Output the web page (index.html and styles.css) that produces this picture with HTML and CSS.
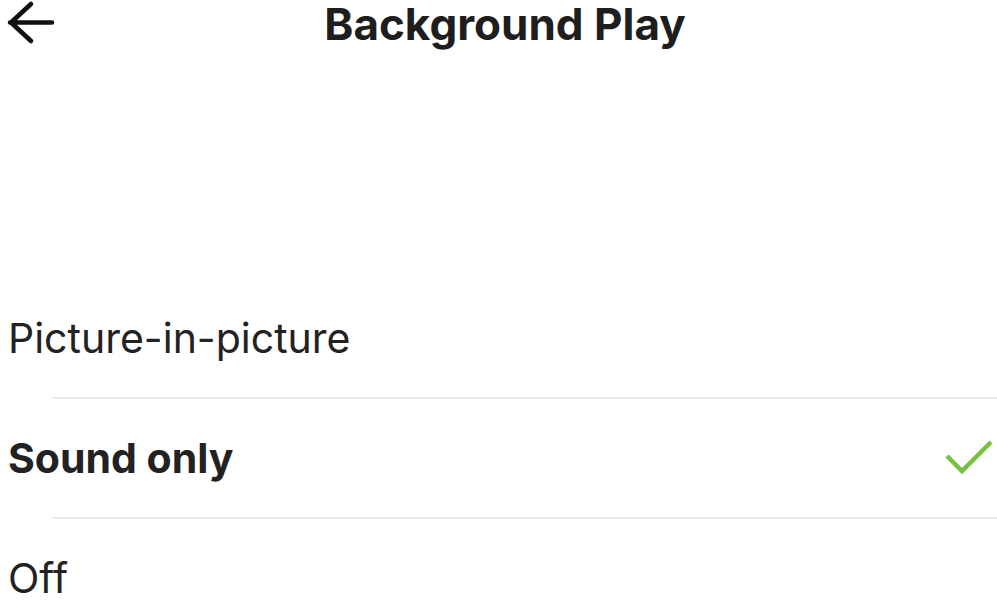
FILE: index.html
```html
<!DOCTYPE html>
<html>
<head>
<meta charset="utf-8">
<link rel="stylesheet" href="styles.css">
</head>
<body>
<div class="page">
  <header class="header">
    <button class="back" aria-label="Back">
      <svg width="60" height="46" viewBox="0 0 60 46"><path d="M52 22.5H10M31 4L11 22.5L31 41" fill="none" stroke="#111" stroke-width="4.6" stroke-linecap="round" stroke-linejoin="round"/></svg>
    </button>
    <h1 class="title">Background Play</h1>
  </header>
  <div class="spacer"></div>
  <ul class="options">
    <li class="option">Picture-in-picture</li>
    <li class="option selected">Sound only
      <svg class="check" width="50" height="40" viewBox="0 0 50 40"><path d="M3 18l15 15L47 4" fill="none" stroke="#79c143" stroke-width="4.5"/></svg>
    </li>
    <li class="option">Off</li>
  </ul>
</div>
</body>
</html>
```
FILE: styles.css
```css
html, body { margin: 0; padding: 0; background: #fff; }
body { font-family: Inter, "Noto Sans", sans-serif; color: #222; }
.page { width: 997px; height: 601px; overflow: hidden; }
.header { position: relative; height: 48px; display: flex; align-items: center; justify-content: center; padding-left: 13px; }
.back { position: absolute; left: 0; top: 0; border: 0; background: none; padding: 0; display: flex; }
.title { margin: 0; font-size: 44px; line-height: 48px; font-weight: 700; color: #1e1e1e; letter-spacing: 0; }
.spacer { height: 231px; }
.options { list-style: none; margin: 0; padding: 0; }
.option { height: 118px; display: flex; align-items: center; justify-content: space-between; padding-left: 8px; padding-right: 3px; font-size: 41px; color: #222; position: relative; }
.option + .option::before { content: ""; position: absolute; left: 52px; right: 0; top: -2px; height: 2px; background: #e5ebf1; }
.option + .option { margin-top: 2px; }
.selected { font-weight: 700; }
.check { display: block; }
```
